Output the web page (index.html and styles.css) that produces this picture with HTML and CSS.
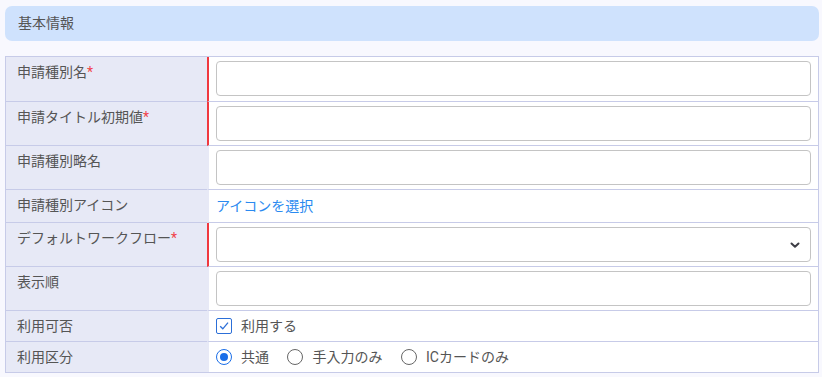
FILE: index.html
```html
<!DOCTYPE html>
<html lang="ja">
<head>
	<meta charset="UTF-8">
	<title>申請種別</title>
	<link rel="stylesheet" href="styles.css">
</head>
<body>

<!-- basic info header -->
<div class="section-head">基本情報</div>

<table class="form-table">
	<tr class="first">
		<td class="label">申請種別名<span class="req">*</span></td>
		<td class="field required"><input type="text" class="text-input"></td>
	</tr>
	<tr>
		<td class="label">申請タイトル初期値<span class="req">*</span></td>
		<td class="field required"><input type="text" class="text-input"></td>
	</tr>
	<tr>
		<td class="label">申請種別略名</td>
		<td class="field"><input type="text" class="text-input"></td>
	</tr>
	<tr>
		<td class="label">申請種別アイコン</td>
		<td class="field link-cell"><a href="#" class="link">アイコンを選択</a></td>
	</tr>
	<tr>
		<td class="label">デフォルトワークフロー<span class="req">*</span></td>
		<td class="field required">
			<div class="select-box">
				<svg class="chevron" width="10" height="7" viewBox="0 0 10 7"><path d="M1.5 1.5 L5 4.8 L8.5 1.5" fill="none" stroke="#3d3d45" stroke-width="2" stroke-linecap="round" stroke-linejoin="round"/></svg>
			</div>
		</td>
	</tr>
	<tr>
		<td class="label">表示順</td>
		<td class="field"><input type="text" class="text-input"></td>
	</tr>
	<tr>
		<td class="label">利用可否</td>
		<td class="field small">
			<span class="option">
				<span class="check">
					<svg width="12" height="12" viewBox="0 0 12 12"><path d="M2.2 6.2 L4.8 8.8 L10 2.6" fill="none" stroke="#2c6fd8" stroke-width="1.3"/></svg>
				</span>利用する
			</span>
		</td>
	</tr>
	<tr class="last">
		<td class="label">利用区分</td>
		<td class="field small">
			<span class="option"><span class="radio on"></span>共通</span>
			<span class="option"><span class="radio"></span>手入力のみ</span>
			<span class="option"><span class="radio"></span>ICカードのみ</span>
		</td>
	</tr>
</table>

</body>
</html>
```

FILE: styles.css
```css
html { background-color: #f8f8fe; }
body { margin: 0; padding: 6px 3px 0 5px; font-family: Roboto, "Noto Sans CJK JP", sans-serif; font-size: 14px; color: #555; }

.section-head { height: 35px; line-height: 35px; padding-left: 13px; background-color: #cfe2fd; border-radius: 7px; margin-bottom: 15px; }

.form-table { width: 814px; border-collapse: separate; border-spacing: 0; border: 1px solid #c7cbe8; table-layout: fixed; }
.form-table td { border-bottom: 1px solid #c7cbe8; vertical-align: top; line-height: 20px; }
.form-table tr.last td { border-bottom: 0; }

.label { width: 201px; box-sizing: border-box; padding: 5px 8px 5px 11px; background-color: #e7e9f6; white-space: nowrap; }
.req { color: #f0434a; }

.field { padding: 4px 7px; background-color: #fff; border-left: 2px solid #e7e9f6; }
.field.required { border-left-color: #f0383f; }
.first .field { padding-bottom: 5px; }
.field.small { padding: 5px 7px; height: 20px; }
.field.link-cell { padding: 6px 7px; }

.text-input, .select-box { display: block; width: 100%; height: 35px; box-sizing: border-box; border: 1px solid #c4c4c4; border-radius: 4px; background-color: #fff; margin: 0; }
.select-box { position: relative; }
.chevron { position: absolute; right: 10px; top: 14px; }

.link { color: #2a8af0; text-decoration: none; }

.option { display: inline-flex; align-items: center; gap: 9px; margin-right: 15px; height: 20px; vertical-align: top; color: #555; }
.check { width: 14px; height: 14px; border: 1px solid #2c6fd8; border-radius: 2px; display: flex; align-items: center; justify-content: center; background-color: #fff; }
.radio { width: 16px; height: 16px; border: 1px solid #666; border-radius: 50%; box-sizing: border-box; background-color: #fff; position: relative; }
.radio.on { border-color: #1a6ee8; }
.radio.on::after { content: ""; position: absolute; left: 3px; top: 3px; width: 8px; height: 8px; border-radius: 50%; background-color: #1a6ee8; }
```
